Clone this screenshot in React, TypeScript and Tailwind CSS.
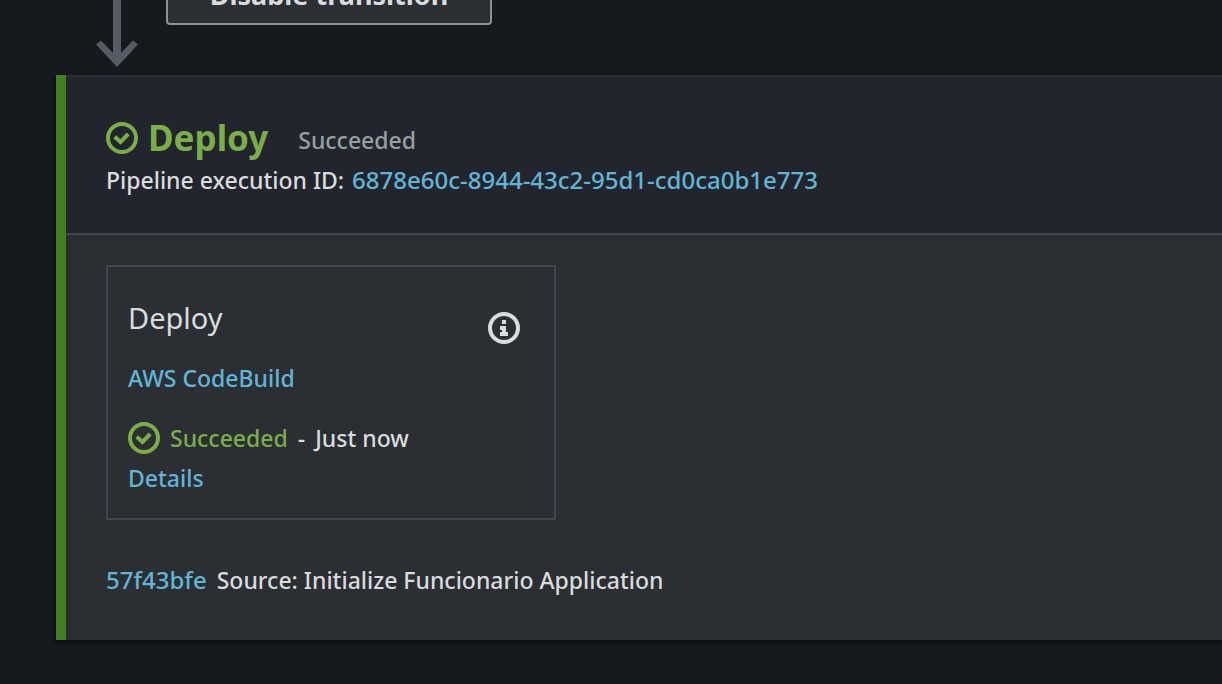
import React from "react";

function CheckCircle() {
  return (
    <svg className="h-8 w-8 shrink-0 text-[#7aae49]" viewBox="0 0 32 32" fill="none" stroke="currentColor" strokeWidth="4" aria-hidden="true">
      <circle cx="16" cy="16" r="14" />
      <path d="M8.700 14.700l5.800 5.300 7.700-8" />
    </svg>
  );
}

function InfoCircle() {
  return (
    <svg className="h-8 w-8" viewBox="0 0 32 32" aria-hidden="true">
      <circle cx="16" cy="16" r="14" fill="none" stroke="currentColor" strokeWidth="4" />
      <path fill="currentColor" d="M14 8h4v4h-4zM12 14h6v6h2v4h-8v-4h2v-2h-2z" />
    </svg>
  );
}

function TransitionArrow() {
  return (
    <svg className="h-[67px] w-[42px] shrink-0" viewBox="0 0 42 67" fill="#545b64" aria-hidden="true">
      <path d="M17 0h8v53l12-12.500 5 4L21 67 0 44.500l5-4L17 53z" />
    </svg>
  );
}

const link = "text-[#62b5d5] hover:underline";

export default function App() {
  return (
    <div className="min-h-screen overflow-hidden bg-[#16191d] pl-14 font-['Noto_Sans',sans-serif] text-[23px] font-medium leading-10 text-[#d9dcdc]">
      <div className="flex h-[75px] items-end gap-7 overflow-hidden pl-10">
        <div className="mb-2">
          <TransitionArrow />
        </div>
        <button
          type="button"
          className="mb-[50px] flex h-[60px] w-[326px] shrink-0 items-center justify-center rounded-sm border-2 border-[#879596] bg-[#2b2e33] text-[27px] font-bold"
        >
          Disable transition
        </button>
      </div>

      <section className="border-l-[10px] border-[#417f22] bg-[#2b2e33] shadow-[0_2px_3px_1px_rgba(0,0,0,0.5)]">
        <header className="border-y-2 border-t-[#2b2e33] border-b-[#414750] bg-[#22252d] px-10 pt-[38px] pb-[33px]">
          <div className="flex min-h-[45px] items-center">
            <CheckCircle />
            <h2 className="ml-[10px] text-[35px] font-bold leading-11 text-[#7aae49]">Deploy</h2>
            <span className="ml-[30px] pt-1 text-[#95a0a2]">Succeeded</span>
          </div>
          <p className="flex flex-wrap gap-x-2">
            <span>Pipeline execution ID:</span>
            <a href="#execution" className={`text-2xl leading-10 ${link}`}>6878e60c-8944-43c2-95d1-cd0ca0b1e773</a>
          </p>
        </header>

        <div className="px-10 pt-[30px] pb-10">
          <article className="max-w-[450px] border-2 border-[#414750] px-5 pt-[31px] pb-5">
            <div className="flex items-start justify-between pr-[14px]">
              <h3 className="text-[29px] font-normal leading-10">Deploy</h3>
              <button type="button" aria-label="Action information" className="mt-[14px]">
                <InfoCircle />
              </button>
            </div>
            <p className="mt-[14px]">
              <a href="#codebuild" className={link}>AWS CodeBuild</a>
            </p>
            <p className="mt-5 flex items-center">
              <CheckCircle />
              <span className="ml-[10px] text-[#7aae49]">Succeeded</span>
              <span className="mx-[10px]">-</span>
              <span>Just now</span>
            </p>
            <p>
              <a href="#details" className={link}>Details</a>
            </p>
          </article>
          <p className="mt-10 flex flex-wrap gap-x-[10px]">
            <a href="#commit" className={`text-2xl leading-10 ${link}`}>57f43bfe</a>
            <span>Source: Initialize Funcionario Application</span>
          </p>
        </div>
      </section>
    </div>
  );
}
